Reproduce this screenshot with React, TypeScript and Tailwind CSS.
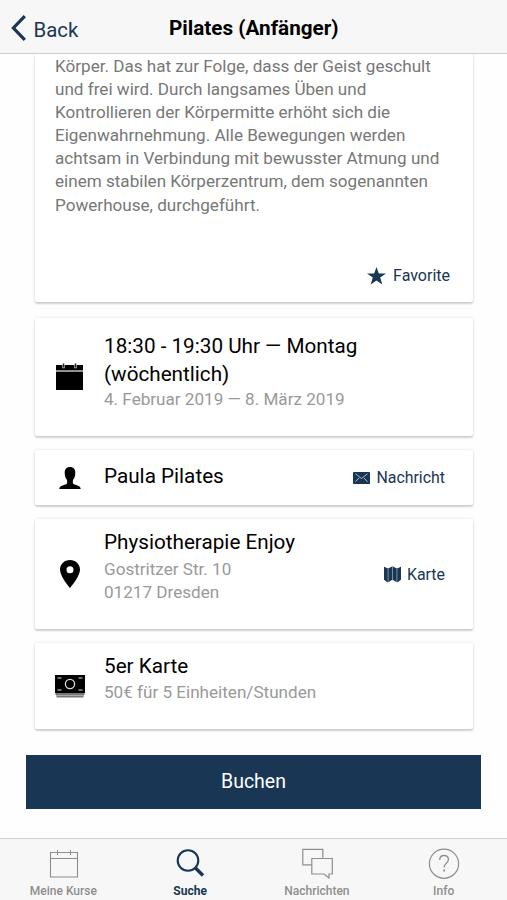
import type { ReactNode } from "react";

type Tab = { id: string; label: string; icon: ReactNode };

const BESCHREIBUNG = [
  "Körper. Das hat zur Folge, dass der Geist geschult",
  "und frei wird. Durch langsames Üben und",
  "Kontrollieren der Körpermitte erhöht sich die",
  "Eigenwahrnehmung. Alle Bewegungen werden",
  "achtsam in Verbindung mit bewusster Atmung und",
  "einem stabilen Körperzentrum, dem sogenannten",
  "Powerhouse, durchgeführt.",
];

function StarIcon() {
  return (
    <svg width="19" height="18" viewBox="0 0 18 18" preserveAspectRatio="none" fill="currentColor">
      <path d="M9 0l2.200 6.500H18l-5.500 4.100 2 6.900L9 13.400l-5.500 4.100 2-6.900L0 6.500h6.800z" />
    </svg>
  );
}

function CalendarIcon() {
  return (
    <svg width="27" height="27" viewBox="0 0 27 27" className="relative -top-px">
      <path d="M0 2h27v5.500H0zM0 8.600h27V27H0z" />
      <path d="M0 7.300h27v1.500H0z" fill="#999" />
      <path d="M7.500 0.500v4.800M19.500 0.500v4.800" stroke="#ccc" strokeWidth="2.400" />
      <path d="M7.500 0.500v4M19.500 0.500v4" stroke="#222" strokeWidth="1.200" />
    </svg>
  );
}

function PersonIcon() {
  return (
    <svg width="22" height="22" viewBox="0 0 22 22">
      <path d="M11 0C7.600 0 5.700 2.200 5.700 5.400c0 3.200.6 5.600 2.300 7.300.4 2.600.3 4.200-1.500 4.900C3.600 18.500.5 19 .3 22h21.400c-.2-3-3.300-3.500-6.200-4.400-1.800-.7-1.900-2.300-1.500-4.900 1.700-1.700 2.300-4.100 2.300-7.300C16.300 2.200 14.400 0 11 0z" />
    </svg>
  );
}

function PinIcon() {
  return (
    <svg width="20" height="28" viewBox="0 0 20 28">
      <path
        fillRule="evenodd"
        d="M10 0C4.500 0 0 4.200 0 9.500 0 16.500 10 28 10 28s10-11.500 10-18.500C20 4.200 15.500 0 10 0zm0 13.200a3.500 3.500 0 1 1 0-7 3.500 3.500 0 0 1 0 7z"
      />
    </svg>
  );
}

function CashIcon() {
  return (
    <svg width="30" height="23" viewBox="0 0 30 23">
      <path d="M0 0h30v18H0z" />
      <circle cx="15" cy="9" r="4.600" fill="none" stroke="#ddd" strokeWidth="1.300" />
      <path d="M2.500 3h4M23.500 3h4M2.500 15h4M23.500 15h4" stroke="#ddd" strokeWidth="1.200" />
      <path d="M.5 18h29v2H.5z" fill="#777" />
      <path d="M1 20h28v1H1z" fill="#aaa" />
      <path d="M1.500 21h27v1.500h-27z" fill="#777" />
    </svg>
  );
}

function MailIcon() {
  return (
    <svg width="17" height="12" viewBox="0 0 17 12">
      <rect width="17" height="12" rx="0.800" fill="currentColor" />
      <path
        d="M2.500 1.800l6 4.700 6-4.700M2.500 9.800l3.600-4M14.500 9.800l-3.600-4"
        fill="none"
        stroke="#b9c5d1"
        strokeWidth="0.900"
      />
    </svg>
  );
}

function MapIcon() {
  return (
    <svg width="17" height="17" viewBox="0 0 17 17" fill="currentColor">
      <path d="M0 .8c1 .2 2.200 1.500 3.900 1.500S7 .5 8.500.5s2.900 1.800 4.600 1.800S16 1 17 .8v13c-1 .2-2.200 2.500-3.900 2.500s-3.100-2.200-4.600-2.200-2.900 2.200-4.600 2.200S1 14 0 13.800z" />
      <path d="M4.100 2v14M8.500 1v13M12.900 2v14" stroke="#a9b6c4" strokeWidth="0.700" />
    </svg>
  );
}

const TABS: Tab[] = [
  {
    id: "kurse",
    label: "Meine Kurse",
    icon: (
      <svg width="32" height="32" viewBox="0 0 32 32" fill="none" stroke="currentColor" strokeWidth="1.100">
        <path d="M3.500 5.500h27v24.500h-27zM3.500 11.500h27M10.500 3v5M23.500 3v5" />
      </svg>
    ),
  },
  {
    id: "suche",
    label: "Suche",
    icon: (
      <svg width="32" height="32" viewBox="0 0 32 32" fill="none" stroke="currentColor">
        <circle cx="14" cy="13.500" r="10.300" strokeWidth="2.100" />
        <path d="M21 20.500l8 8" strokeWidth="3.400" />
      </svg>
    ),
  },
  {
    id: "nachrichten",
    label: "Nachrichten",
    icon: (
      <svg width="32" height="32" viewBox="0 0 32 32" fill="none" stroke="currentColor" strokeWidth="1.200">
        <path d="M10.500 17.800H1.800V2.300h20v8.500" />
        <path d="M10.800 11.500h20.500v15.500H28v4l-5-4H10.800z" />
      </svg>
    ),
  },
  {
    id: "info",
    label: "Info",
    icon: (
      <svg width="32" height="32" viewBox="0 0 32 32" fill="none" stroke="currentColor" strokeWidth="1.200">
        <circle cx="16" cy="16.700" r="14.600" />
        <path d="M11.700 13c0-2.900 1.700-4.500 4.300-4.500s4.400 1.600 4.400 4c0 3.800-4.300 3.900-4.300 8" strokeWidth="1.300" />
        <path d="M15.200 22.500h1.800v1.900h-1.800z" fill="currentColor" stroke="none" />
      </svg>
    ),
  },
];

const CARD =
  "mr-[34px] ml-[35px] rounded-[2px] bg-white shadow-[0_2px_2px_rgba(0,0,0,0.16),0_0_3px_rgba(0,0,0,0.12)]";

interface InfoCardProps {
  icon: ReactNode;
  className: string;
  action?: ReactNode;
  children: ReactNode;
}

function InfoCard({ icon, className, action, children }: InfoCardProps) {
  return (
    <section className={`${CARD} flex items-center pr-7 ${className}`}>
      <div className="flex w-[69px] shrink-0 justify-center">{icon}</div>
      <div className="min-w-0 flex-1 self-start whitespace-nowrap">{children}</div>
      {action}
    </section>
  );
}

export default function App() {
  return (
    <div className="flex h-[900px] w-[507px] flex-col overflow-hidden bg-[#fefefe] font-['Roboto',sans-serif] text-black">
      <header className="grid h-[54px] shrink-0 grid-cols-3 items-center border-b border-[#cfcfcf] bg-[#f7f7f7] pt-1">
        <button type="button" className="flex items-center gap-2 pl-[10.500px] text-[20.400px] text-[#193654]">
          <svg width="15" height="26" viewBox="0 0 15 26" fill="none" stroke="currentColor" strokeWidth="3.200">
            <path d="M13.800 1.200L2.400 13l11.400 11.800" />
          </svg>
          <span className="pt-[3px]">Back</span>
        </button>
        <h1 className="text-center text-[20.700px] font-bold whitespace-nowrap">Pilates (Anfänger)</h1>
      </header>

      <main className="flex min-h-0 flex-1 flex-col">
        <section className={`${CARD} h-[248px] shrink-0 px-5 [clip-path:inset(0_-6px_-6px_-6px)]`}>
          <p className="pt-px text-[17.100px] leading-[23.100px] whitespace-nowrap text-[#777]">
            {BESCHREIBUNG.map((zeile) => (
              <span key={zeile} className="block">{zeile}</span>
            ))}
          </p>
          <button type="button" className="mt-[47px] ml-auto flex items-center gap-[7px] pr-[3px] text-[16px] text-[#193654]">
            <StarIcon />
            Favorite
          </button>
        </section>

        <InfoCard icon={<CalendarIcon />} className="mt-4 h-[118px] shrink-0">
          <h2 className="pt-[14px] text-[20.700px] leading-7">
            18:30 - 19:30 Uhr — Montag
            <br />
            (wöchentlich)
          </h2>
          <p className="text-[17.100px] leading-[23px] text-[#999]">4. Februar 2019 — 8. März 2019</p>
        </InfoCard>

        <InfoCard
          icon={<PersonIcon />}
          className="mt-[14px] h-[55px] shrink-0"
          action={
            <button type="button" className="flex items-center gap-[6px] pt-px text-[15.900px] text-[#193654]">
              <MailIcon />
              Nachricht
            </button>
          }
        >
          <h2 className="pt-3 text-[20.700px] leading-7">Paula Pilates</h2>
        </InfoCard>

        <InfoCard
          icon={<PinIcon />}
          className="mt-[14px] h-[110px] shrink-0"
          action={
            <button type="button" className="flex items-center gap-[6px] pt-px text-[15.900px] text-[#193654]">
              <MapIcon />
              Karte
            </button>
          }
        >
          <h2 className="pt-[9px] text-[20.700px] leading-7">Physiotherapie Enjoy</h2>
          <p className="pt-[2px] text-[17.100px] leading-[23px] text-[#999]">
            Gostritzer Str. 10
            <br />
            01217 Dresden
          </p>
        </InfoCard>

        <InfoCard icon={<CashIcon />} className="mt-[14px] h-[86px] shrink-0">
          <h2 className="pt-[9px] text-[20.700px] leading-7">5er Karte</h2>
          <p className="pt-px text-[17.100px] leading-[23px] text-[#999]">50€ für 5 Einheiten/Stunden</p>
        </InfoCard>

        <button
          type="button"
          className="mx-[26px] mt-[26px] h-[54px] shrink-0 bg-[#193654] text-[19.500px] text-white"
        >
          Buchen
        </button>
      </main>

      <nav className="grid h-[62px] shrink-0 grid-cols-4 border-t border-[#cfcfcf] bg-[#f7f7f7]">
        {TABS.map((tab) => (
          <button
            key={tab.id}
            type="button"
            className={`flex flex-col items-center pt-2 text-[12px] leading-4 ${
              tab.id === "suche" ? "font-bold text-[#193654]" : "font-medium text-[#8e8e8e]"
            }`}
          >
            {tab.icon}
            <span className="mt-1">{tab.label}</span>
          </button>
        ))}
      </nav>
    </div>
  );
}
